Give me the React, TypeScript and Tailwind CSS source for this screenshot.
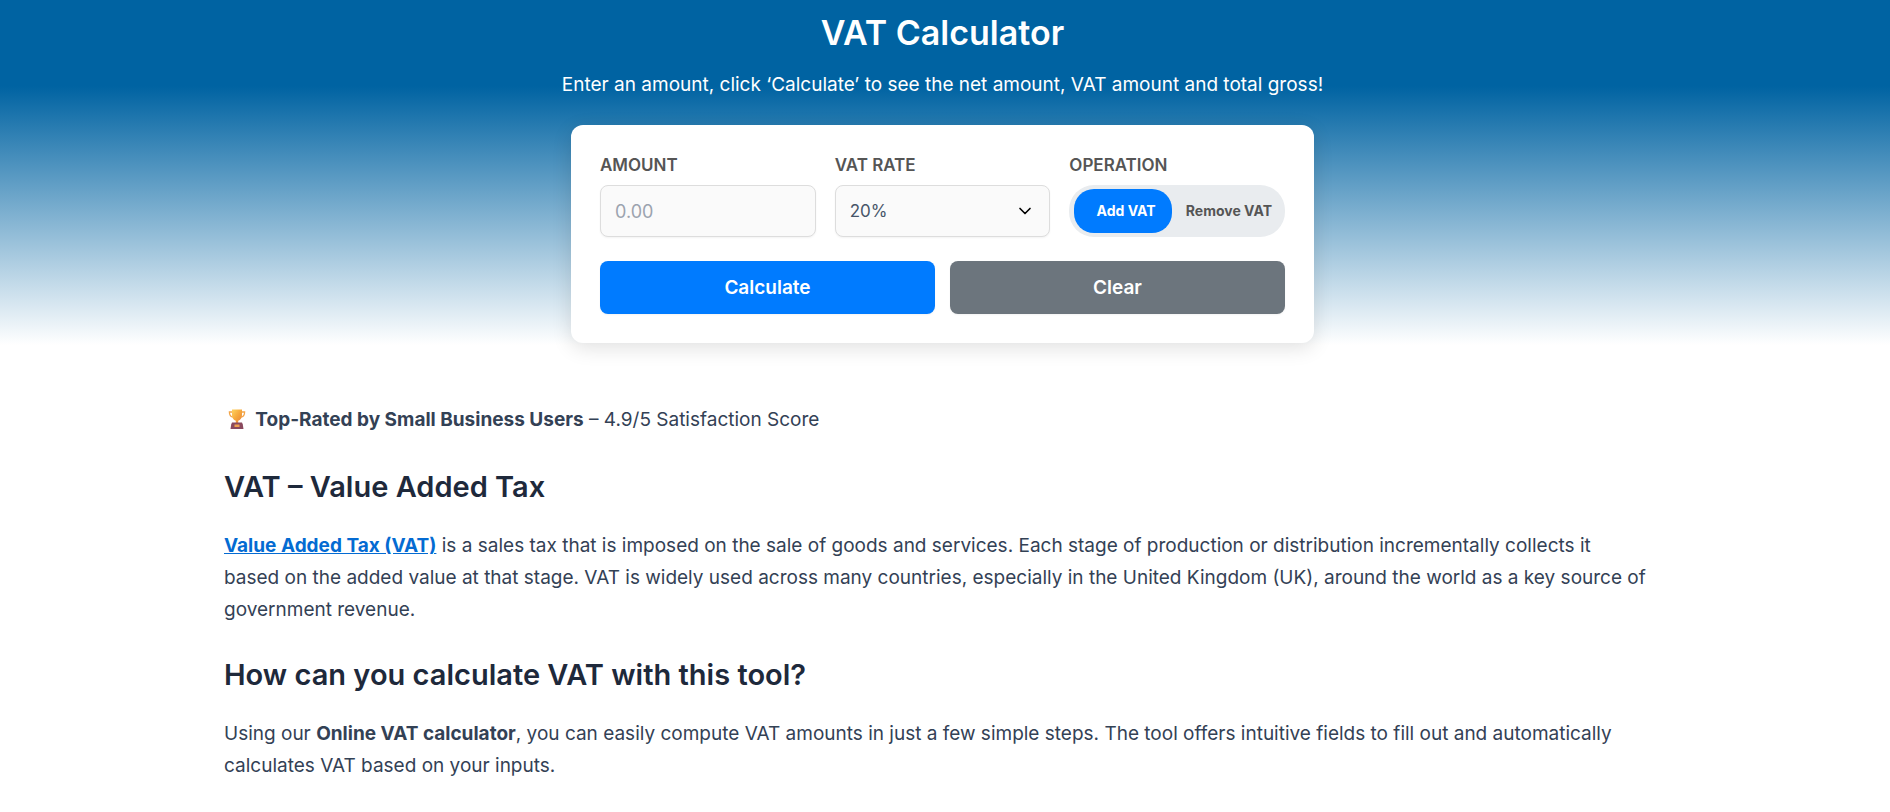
import { useState } from 'react';
import type { FormEvent } from 'react';
import { ChevronDown } from 'lucide-react';

type Operation = 'add' | 'remove';

const rates = ['20', '5', '0'];

function TrophyIcon() {
  return (
    <svg viewBox="0 0 18 20" className="mx-1 inline-block h-5 w-[18px] align-[-3px]" aria-hidden="true">
      <defs>
        <linearGradient id="cup" x1="0" y1="0" x2="1" y2="1">
          <stop offset="0" stopColor="#ffd45e" />
          <stop offset="0.5" stopColor="#f6a83c" />
          <stop offset="1" stopColor="#e8823a" />
        </linearGradient>
      </defs>
      <path d="M4.500 3H1.400c0 3.200 1.400 5 4 5.200M13.500 3h3.100c0 3.200-1.400 5-4 5.200" fill="none" stroke="#f3a447" strokeWidth="1.300" />
      <path d="M4 .5h10V6c0 3-1.500 5-3.800 5.800v2.200H7.800v-2.200C5.500 11 4 9 4 6z" fill="url(#cup)" />
      <path d="M4 13.500h10l.8 2 .7 4.500h-13l.7-4.500z" fill="#8a4a5e" />
      <rect x="6.500" y="15.500" width="5" height="2.500" fill="#f0a050" />
    </svg>
  );
}

function Calculator() {
  const [amount, setAmount] = useState('');
  const [rate, setRate] = useState('20');
  const [operation, setOperation] = useState<Operation>('add');
  const [result, setResult] = useState<{ net: number; vat: number; gross: number } | null>(null);

  const handleSubmit = (e: FormEvent) => {
    e.preventDefault();
    const value = parseFloat(amount);
    if (Number.isNaN(value)) return;

    const factor = 1 + Number(rate) / 100;
    const net = operation === 'add' ? value : value / factor;
    const gross = operation === 'add' ? value * factor : value;
    setResult({ net, vat: gross - net, gross });
  };

  const handleClear = () => {
    setAmount('');
    setRate('20');
    setOperation('add');
    setResult(null);
  };

  return (
    <form
      onSubmit={handleSubmit}
      className="w-full max-w-[743px] rounded-xl bg-white p-[29px] shadow-[0_5px_20px_rgba(0,0,0,0.12)]"
    >
      <div className="grid gap-[19px] sm:grid-cols-3">
        <div>
          <label htmlFor="amount" className="mb-2 block text-[17px] leading-[23px] font-semibold text-[#555]">
            AMOUNT
          </label>
          <input
            id="amount"
            type="text"
            inputMode="decimal"
            placeholder="0.00"
            value={amount}
            onChange={(e) => setAmount(e.target.value)}
            className="h-[52px] w-full rounded-lg border border-[#ddd] bg-[#fafafa] px-[14px] text-lg text-[#475569] shadow-xs placeholder:text-[#9ca3af]"
          />
        </div>

        <div>
          <label htmlFor="rate" className="mb-2 block text-[17px] leading-[23px] font-semibold text-[#555]">
            VAT RATE
          </label>
          <div className="relative">
            <select
              id="rate"
              value={rate}
              onChange={(e) => setRate(e.target.value)}
              className="h-[52px] w-full appearance-none rounded-lg border border-[#ddd] bg-[#fafafa] px-[14px] pt-px text-[17px] text-[#475569] shadow-xs"
            >
              {rates.map((r) => (
                <option key={r} value={r}>
                  {r}%
                </option>
              ))}
            </select>
            <ChevronDown className="pointer-events-none absolute top-4 right-[15px] h-5 w-5 text-black" />
          </div>
        </div>

        <fieldset>
          <legend className="mb-2 block text-[17px] leading-[23px] font-semibold text-[#555]">OPERATION</legend>
          <div className="flex h-[52px] rounded-[25px] bg-[#e9ecef] px-[5px] py-1">
            <button
              type="button"
              aria-pressed={operation === 'add'}
              onClick={() => setOperation('add')}
              className={`flex-1 cursor-pointer rounded-[20px] pl-[6px] text-sm font-bold ${
                operation === 'add' ? 'bg-[#007bff] text-white' : 'text-[#555]'
              }`}
            >
              Add VAT
            </button>
            <button
              type="button"
              aria-pressed={operation === 'remove'}
              onClick={() => setOperation('remove')}
              className={`cursor-pointer rounded-[20px] pr-2 pl-[14px] text-sm font-bold whitespace-nowrap ${
                operation === 'remove' ? 'bg-[#007bff] text-white' : 'text-[#555]'
              }`}
            >
              Remove VAT
            </button>
          </div>
        </fieldset>
      </div>

      <div className="mt-6 flex gap-[15px]">
        <button
          type="submit"
          className="h-[53px] flex-1 cursor-pointer rounded-lg bg-[#007bff] pt-[2px] text-[19px] font-semibold text-white shadow-xs"
        >
          Calculate
        </button>
        <button
          type="button"
          onClick={handleClear}
          className="h-[53px] flex-1 cursor-pointer rounded-lg bg-[#6c757d] pt-[2px] text-[19px] font-semibold text-white shadow-xs"
        >
          Clear
        </button>
      </div>

      {result && (
        <dl className="mt-6 grid grid-cols-3 gap-4 text-center text-[#475569]">
          <div>
            <dt>Net amount</dt>
            <dd className="font-semibold">{result.net.toFixed(2)}</dd>
          </div>
          <div>
            <dt>VAT amount</dt>
            <dd className="font-semibold">{result.vat.toFixed(2)}</dd>
          </div>
          <div>
            <dt>Total gross</dt>
            <dd className="font-semibold">{result.gross.toFixed(2)}</dd>
          </div>
        </dl>
      )}
    </form>
  );
}

export default function App() {
  return (
    <div className="min-h-screen bg-white font-[Inter,sans-serif] text-[#334155]">
      {/* Hero */}
      <header className="flex flex-col items-center bg-[linear-gradient(180deg,#0063a2_25%,#ffffff_100%)] pt-[11px] pr-[5px] pb-[2px] text-center">
        <h1 className="text-[34px] leading-[44px] font-semibold text-white">VAT Calculator</h1>
        <p className="mt-[14px] mb-6 text-[19px] leading-8 text-white">
          Enter an amount, click ‘Calculate’ to see the net amount, VAT amount and total gross!
        </p>
        <div className="flex w-full justify-center text-left">
          <Calculator />
        </div>
      </header>

      {/* Article */}
      <main className="pr-[5px]">
        <article className="mx-auto max-w-[1437px] pt-[59px] pb-10 text-[19px] leading-8">
          <p>
            <TrophyIcon /> <strong className="font-bold">Top-Rated by Small Business Users</strong> – 4.9/5
            Satisfaction Score
          </p>

          <h2 className="mt-8 mb-6 text-[29px] leading-[38px] font-semibold text-[#1e293b]">VAT – Value Added Tax</h2>
          <p>
            <a href="#vat" className="font-bold text-[#046bd2] underline">
              Value Added Tax (VAT)
            </a>{' '}
            is a sales tax that is imposed on the sale of goods and services. Each stage of production or distribution
            incrementally collects it <br className="hidden 2xl:inline" />
            based on the added value at that stage. VAT is widely used across many countries, especially in the United
            Kingdom (UK), around the world as a key source of government revenue.
          </p>

          <h2 className="mt-[30px] mb-6 text-[29px] leading-[38px] font-semibold text-[#1e293b]">
            How can you calculate VAT with this tool?
          </h2>
          <p>
            Using our <strong className="font-bold">Online VAT calculator</strong>, you can easily compute VAT amounts
            in just a few simple steps. The tool offers intuitive fields to fill out and automatically calculates VAT
            based on your inputs.
          </p>
        </article>
      </main>
    </div>
  );
}
